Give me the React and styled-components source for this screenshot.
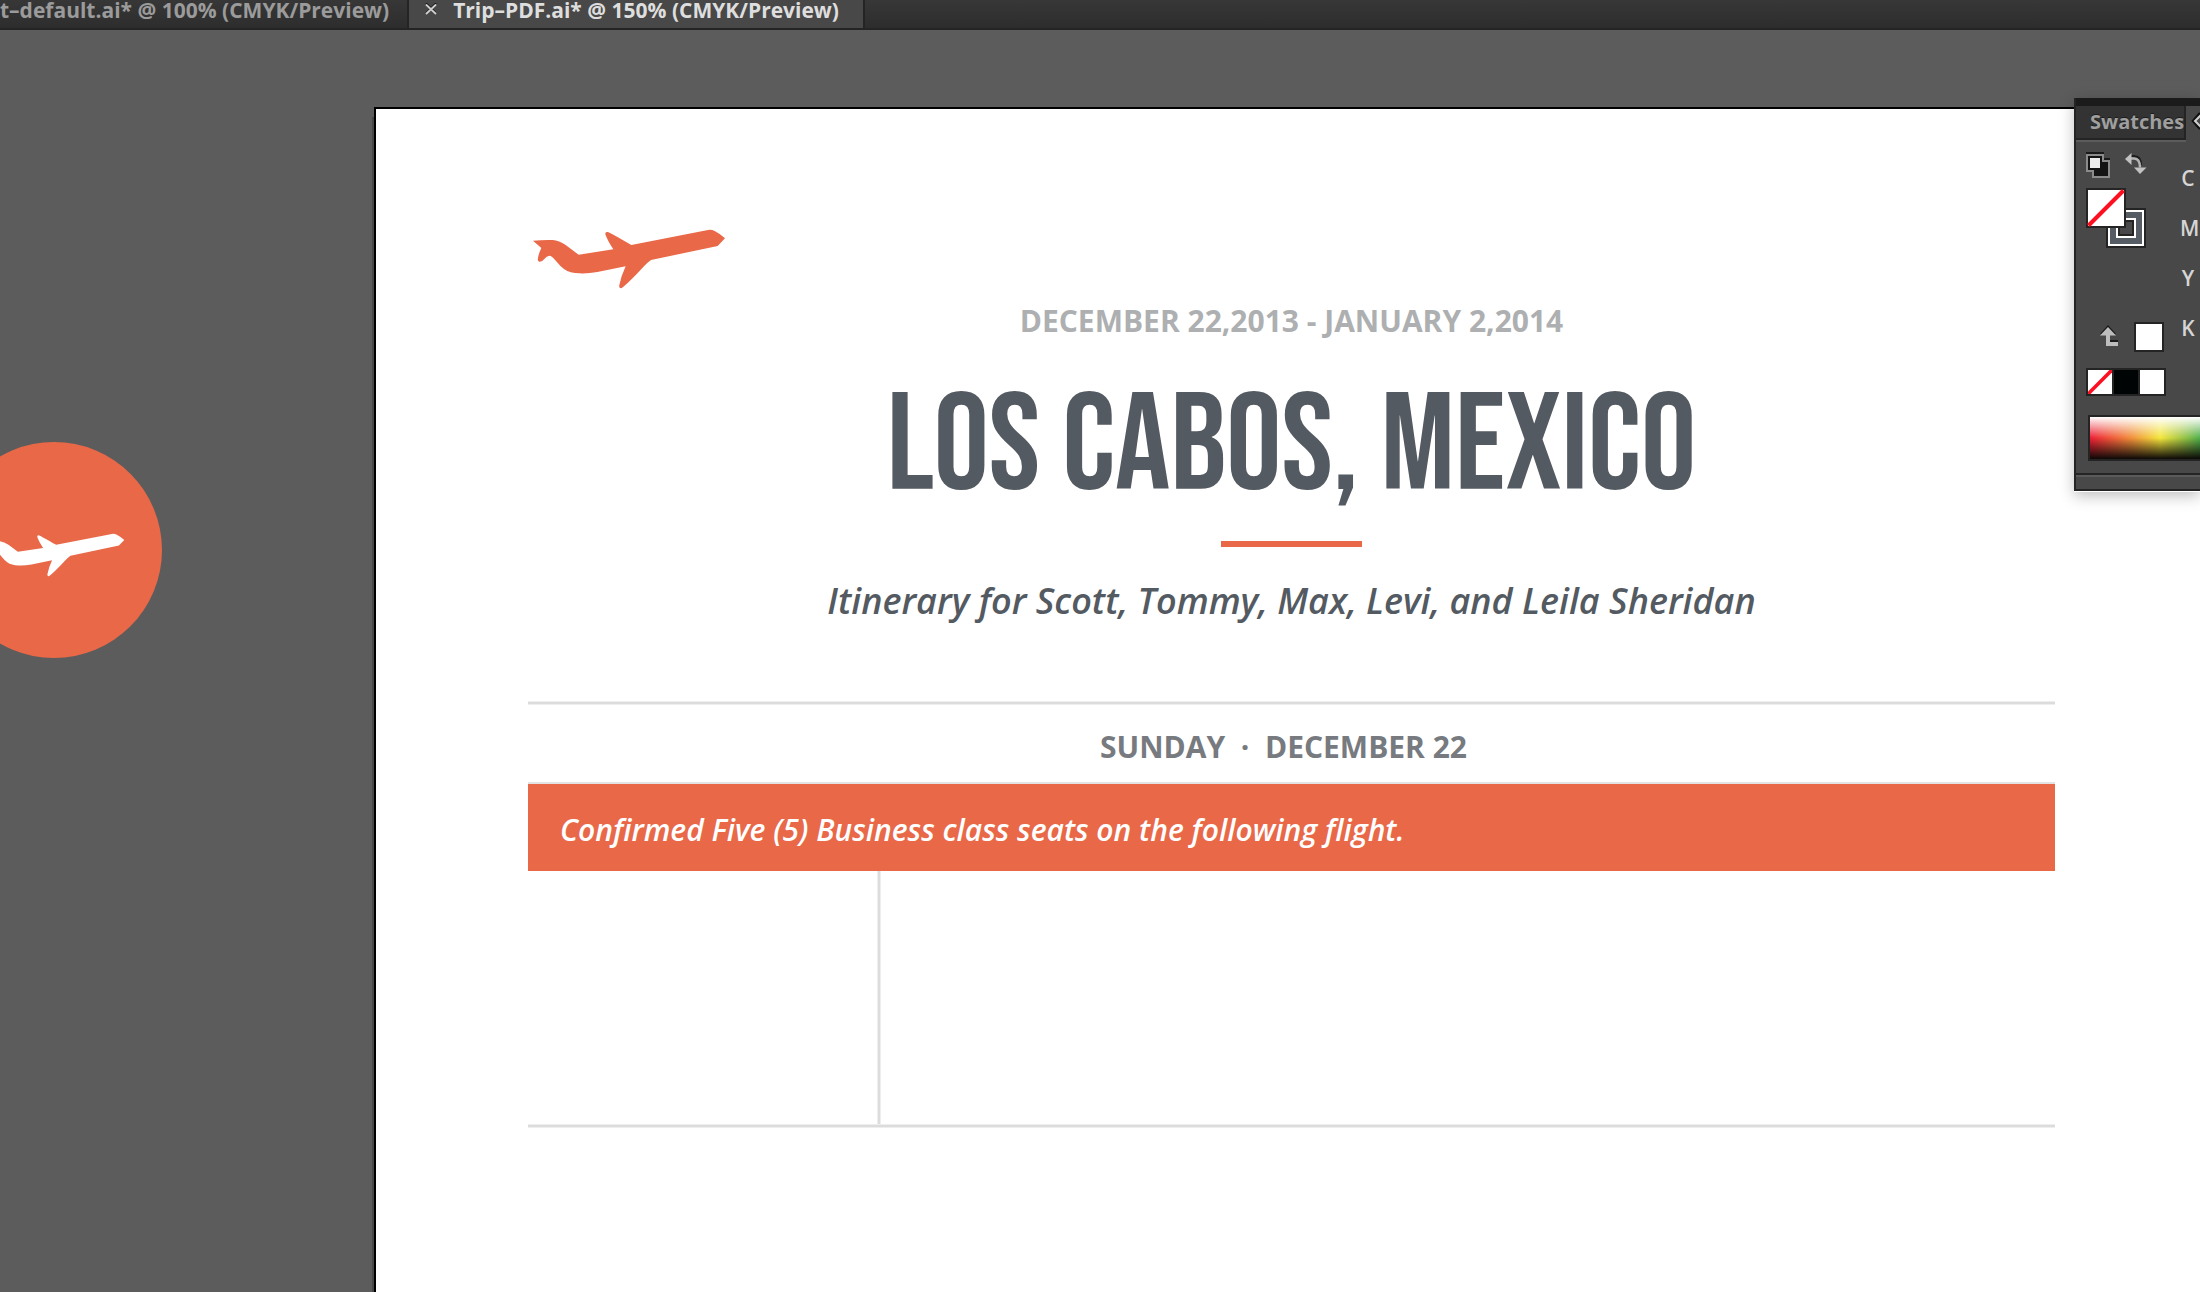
import React from "react";
import styled, { createGlobalStyle } from "styled-components";

const orange = "#e96848";
const slate = "#545a61";
const edge = "#242424";

const Global = createGlobalStyle`
  * { box-sizing: border-box; }
  body { margin: 0; background: #5c5c5c; font-family: "Open Sans", "Noto Sans", sans-serif; }
  button { margin: 0; padding: 0; border: 0; background: none; font: inherit; color: inherit; display: block; }
  svg { display: block; }
`;

const Window = styled.div`
  height: 100vh;
  display: flex;
  flex-direction: column;
  overflow: hidden;
`;

const TabBar = styled.nav`
  flex: none;
  display: flex;
  height: 30px;
  background: linear-gradient(#373737, #2d2d2d);
  border-bottom: 2px solid ${edge};
`;

const DocTab = styled.div`
  display: flex;
  align-items: flex-start;
  gap: 15px;
  padding: ${(p) => (p.$active ? "0 24px 0 15px" : "0 18px 0 0")};
  border-right: 2px solid ${edge};
  background: ${(p) => (p.$active ? "#484848" : "none")};
  color: ${(p) => (p.$active ? "#dedede" : "#9b9b9b")};
  text-shadow: 0 -1px 0 #1c1c1c;
`;

const TabName = styled.button`
  && {
    font-size: 21px;
    line-height: 20px;
    font-weight: 700;
    white-space: nowrap;
  }
`;

const CloseButton = styled.button`
  && {
    padding-top: 3px;
  }
`;

const Canvas = styled.main`
  position: relative;
  flex: 1;
  min-height: 0;
  display: flex;
  padding: 77px 0 0 374px;
`;

const Badge = styled.div`
  position: absolute;
  left: -54px;
  top: 412px;
  width: 216px;
  height: 216px;
  border-radius: 50%;
  background: ${orange};
  display: flex;
  align-items: center;
  justify-content: center;
  padding-top: 10px;
`;

const Sheet = styled.article`
  flex: 1;
  background: #fff;
  border: solid #000;
  border-width: 2px 0 0 2px;
  box-shadow: -2px 10px 0 #484848;
  padding: 120px 145px 0 152px;
`;

const Logo = styled.div`
  padding-left: 4px;
`;

const Heading = styled.header`
  display: flex;
  flex-direction: column;
  align-items: center;
  text-align: center;
`;

const Dates = styled.p`
  margin: 11px 0 0;
  font-size: 30px;
  line-height: 42px;
  font-weight: 700;
  color: #adafb1;
`;

const Title = styled.h1`
  margin: 36px 0 23px;
  font-family: "Bebas Neue", "Open Sans Condensed", "Roboto Condensed", sans-serif;
  font-size: 138px;
  line-height: 140px;
  font-weight: 400;
  color: ${slate};
`;

const Accent = styled.div`
  width: 141px;
  height: 6px;
  background: ${orange};
`;

const Subtitle = styled.p`
  margin: 30px 0 76px;
  font-size: 36px;
  line-height: 48px;
  font-weight: 600;
  font-style: italic;
  color: ${slate};
`;

const Rule = styled.div`
  height: ${(p) => (p.$vertical ? "auto" : "4px")};
  width: ${(p) => (p.$vertical ? "4px" : "auto")};
  background: #dcdcdc;
  border: solid #eee;
  border-width: ${(p) => (p.$vertical ? "0 1px" : "1px 0")};
`;

const DayTitle = styled.h2`
  margin: 0;
  padding: 21px 16px 14px 0;
  border-bottom: 2px solid #e3e3e3;
  font-size: 30px;
  line-height: 42px;
  font-weight: 700;
  text-align: center;
  color: #777a7f;
  white-space: pre;
`;

const Notice = styled.p`
  margin: 0;
  padding: 25px 32px 20px;
  background: ${orange};
  color: #fff;
  font-size: 30px;
  line-height: 42px;
  font-weight: 600;
  font-style: italic;
`;

const DayBody = styled.div`
  display: grid;
  grid-template-columns: 349px 4px 1fr;
  min-height: 253px;
`;

const Panel = styled.aside`
  position: absolute;
  top: 68px;
  right: 0;
  width: 126px;
  overflow: hidden;
  background: #484848;
  border: solid ${edge};
  border-width: 0 0 2px 2px;
`;

const PanelShadow = styled.div`
  position: absolute;
  top: 68px;
  right: 0;
  width: 126px;
  height: 394px;
  box-shadow: 0 4px 14px rgba(0, 0, 0, 0.25);
`;

const PanelTabs = styled.div`
  display: flex;
  height: 42px;
  border-top: 8px solid #1b1b1b;
`;

const PanelTab = styled.button`
  && {
    width: 110px;
    padding-left: 14px;
    background: #333;
    border: solid ${edge};
    border-width: 0 2px 2px 0;
    box-shadow: 0 2px 0 #5c5c5c;
    color: #9f9f9f;
    font-size: 20px;
    line-height: 32px;
    font-weight: 700;
    text-align: left;
    text-shadow: 0 -1px 0 #1c1c1c;
  }
`;

const PanelMore = styled.button`
  && {
    padding: 0 0 4px 5px;
  }
`;

const PanelBody = styled.div`
  display: flex;
  gap: 14px;
  padding: 12px 0 0 10px;
`;

const Tools = styled.div`
  flex: none;
  width: 80px;
`;

const ToolRow = styled.div`
  display: flex;
  justify-content: space-between;
  align-items: flex-start;
  height: ${(p) => p.$h}px;
  padding: 0 ${(p) => p.$right || 0}px 0 ${(p) => p.$left || 0}px;
  margin-bottom: ${(p) => p.$after || 0}px;
`;

const LastColour = styled.button`
  && {
    padding-top: 3px;
  }
`;

const Chip = styled.button`
  && {
    width: ${(p) => p.$w}px;
    height: ${(p) => p.$h}px;
    border: 2px solid ${edge};
    background: ${(p) => p.$fill};
  }
`;

const ChipStrip = styled.div`
  display: flex;
  & > * + * { margin-left: -2px; }
`;

const Channels = styled.div`
  display: flex;
  flex-direction: column;
  width: 16px;
  padding-top: 1px;
  font-size: 21px;
  line-height: 50px;
  font-weight: 600;
  text-align: center;
  color: #d6d6d6;
`;

const Spectrum = styled.div`
  height: 46px;
  margin: 19px 0 12px 12px;
  border: solid ${edge};
  border-width: 2px 0 2px 2px;
  background:
    linear-gradient(#fff, rgba(255, 255, 255, 0) 50%, rgba(0, 0, 0, 0) 50%, #0c0806),
    linear-gradient(90deg, #ec1f36, #f08a3a 36%, #f3e63c 64%, #a8c843 82%, #4fae4c);
`;

const PanelFoot = styled.div`
  height: 16px;
  border-top: 2px solid ${edge};
  box-shadow: inset 0 2px 0 #5a5a5a;
`;

function Plane({ color, width, height }) {
  return (
    <svg width={width} height={height} viewBox="66 58 582 180" aria-hidden="true">
      <path
        fill={color}
        d="M69 93 Q100 90 128 91 Q147 92 167 106 L206 135 L310 119 Q292 92 286 74 Q285 65 294 67 Q302 70 364 106 L594 61 Q604 59 614 64 Q630 72 645 86 L623 109 L423 151 Q413 158 402 170 Q353 223 334 236 Q326 237 328 226 Q333 200 347 170 L262 187 Q235 192 208 191 Q180 191 162 178 Q150 169 138 154 Q125 138 118 138 Q110 139 103 148 Q96 157 88 156 Q82 155 84 145 Q86 131 94 115 Z"
      />
    </svg>
  );
}

function NoneMark() {
  return (
    <svg width="24" height="24" viewBox="0 0 24 24" aria-hidden="true">
      <path d="M0 24L24 0" stroke="#fb0f20" strokeWidth="3.6" />
    </svg>
  );
}

function FillStroke() {
  return (
    <svg width="60" height="60" viewBox="0 0 60 60" aria-hidden="true">
      <path fill="#242424" d="M20 20h40v40H20z" />
      <path fill="#fff" d="M22 22h36v36H22z" />
      <path fill="#565c63" d="M24 24h32v32H24z" />
      <path fill="#fff" d="M30 30h20v20H30z" />
      <path fill="#242424" d="M32 32h16v16H32z" />
      <path fill="#484848" d="M34 34h12v12H34z" />
      <path fill="#242424" d="M0 0h40v40H0z" />
      <path fill="#fff" d="M2 2h36v36H2z" />
      <path d="M2.5 37.5L37.5 2.5" stroke="#fb0f20" strokeWidth="4" />
    </svg>
  );
}

function DefaultsIcon() {
  return (
    <svg width="24" height="26" viewBox="0 0 24 26" aria-hidden="true">
      <path fill="#1a1a1a" d="M0 0h18v2H0zM18 6h6v2h-6z" />
      <path fill="#8b8b8b" d="M6 8h18v18H6z" />
      <path fill="#141414" d="M8 10h14v14H8z" />
      <path fill="#8b8b8b" d="M0 2h18v18H0z" />
      <path fill="#141414" d="M8 18h10v2H8zM16 10h2v10h-2z" />
      <path fill="#141414" d="M2 4h14v14H2z" />
      <path fill="#ececec" d="M4 6h10v10H4z" />
    </svg>
  );
}

function SwapIcon() {
  return (
    <svg width="22" height="22" viewBox="0 0 22 22" aria-hidden="true">
      <path fill="none" stroke="#1e1e1e" strokeWidth="2" d="M6 4h3q7 0 7 9" />
      <path fill="none" stroke="#b4b4b4" strokeWidth="2.4" d="M6 6.5h3q6 0 6 9" />
      <path fill="#c2c2c2" d="M0 7L6.5 1v12z" />
      <path fill="#c2c2c2" d="M9 15.5h12.5L15 22z" />
    </svg>
  );
}

function ReturnIcon() {
  return (
    <svg width="18" height="22" viewBox="0 0 18 22" aria-hidden="true">
      <path fill="#1a1a1a" d="M0 9L8 0l8 9zM9 15h9v3H9z" />
      <path fill="#bdbdbd" d="M0 10.5L8 2l8 8.5h-6V17h8v4H6V10.5z" />
    </svg>
  );
}

export default function App() {
  return (
    <Window>
      <Global />
      <TabBar>
        <DocTab>
          <TabName>t–default.ai* @ 100% (CMYK/Preview)</TabName>
        </DocTab>
        <DocTab $active>
          <CloseButton aria-label="Close document">
            <svg width="14" height="12" viewBox="0 0 14 12" aria-hidden="true">
              <path d="M2 0L12 10M12 0L2 10" stroke="#111" strokeWidth="1.5" />
              <path d="M2 1.5L12 11M12 1.5L2 11" stroke="#cfcfcf" strokeWidth="1.8" />
            </svg>
          </CloseButton>
          <TabName>Trip–PDF.ai* @ 150% (CMYK/Preview)</TabName>
        </DocTab>
      </TabBar>
      <Canvas>
        <Badge>
          <Plane color="#fff" width={141} height={44} />
        </Badge>
        <Sheet>
          <Logo>
            <Plane color={orange} width={194} height={60} />
          </Logo>
          <Heading>
            <Dates>DECEMBER 22,2013 - JANUARY 2,2014</Dates>
            <Title>LOS CABOS, MEXICO</Title>
            <Accent />
            <Subtitle>Itinerary for Scott, Tommy, Max, Levi, and Leila Sheridan</Subtitle>
          </Heading>
          <section>
            <Rule />
            <DayTitle>{"SUNDAY  ·  DECEMBER 22"}</DayTitle>
            <Notice>Confirmed Five (5) Business class seats on the following flight.</Notice>
            <DayBody>
              <div />
              <Rule $vertical />
              <div />
            </DayBody>
            <Rule />
          </section>
        </Sheet>
        <PanelShadow />
        <Panel>
          <PanelTabs>
            <PanelTab>Swatches</PanelTab>
            <PanelMore aria-label="Cycle panel view">
              <svg width="10" height="18" viewBox="0 0 10 18" aria-hidden="true">
                <path d="M9 1L2 9l7 8" fill="none" stroke="#0f0f0f" strokeWidth="2.5" />
                <path d="M10 3L4 9l6 6" fill="none" stroke="#cfcfcf" strokeWidth="2" />
              </svg>
            </PanelMore>
          </PanelTabs>
          <PanelBody>
            <Tools>
              <ToolRow $h={26} $right={19} $after={10}>
                <button aria-label="Default fill and stroke"><DefaultsIcon /></button>
                <button aria-label="Swap fill and stroke"><SwapIcon /></button>
              </ToolRow>
              <ToolRow $h={60} $after={74}>
                <button aria-label="Fill and stroke"><FillStroke /></button>
              </ToolRow>
              <ToolRow $h={30} $left={14} $right={2} $after={16}>
                <LastColour aria-label="Last colour"><ReturnIcon /></LastColour>
                <Chip $w={30} $h={30} $fill="#fff" aria-label="Current colour" />
              </ToolRow>
              <ChipStrip>
                <Chip $w={28} $h={28} $fill="#fff" aria-label="None"><NoneMark /></Chip>
                <Chip $w={28} $h={28} $fill="#000405" aria-label="Black" />
                <Chip $w={28} $h={28} $fill="#fff" aria-label="White" />
              </ChipStrip>
            </Tools>
            <Channels>
              <span>C</span>
              <span>M</span>
              <span>Y</span>
              <span>K</span>
            </Channels>
          </PanelBody>
          <Spectrum />
          <PanelFoot />
        </Panel>
      </Canvas>
    </Window>
  );
}
